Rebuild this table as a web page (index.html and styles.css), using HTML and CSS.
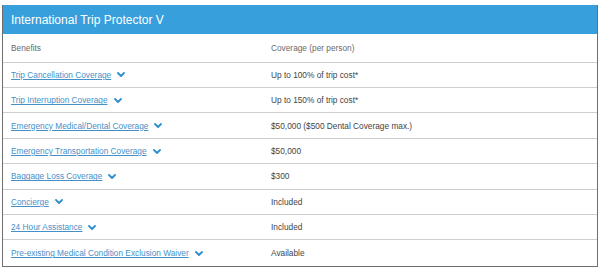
FILE: index.html
```html
<!DOCTYPE html>
<html>
<head>
<meta charset="utf-8">
<link rel="stylesheet" href="styles.css">
</head>
<body>
<div class="card">
  <div class="title">International Trip Protector V</div>
  <div class="row head">
    <div class="c1">Benefits</div>
    <div class="c2">Coverage (per person)</div>
  </div>
  <div class="row">
    <div class="c1"><a href="#">Trip Cancellation Coverage</a><svg class="chev" viewBox="0 0 8 5"><polyline points="1,1 4,4 7,1"/></svg></div>
    <div class="c2">Up to 100% of trip cost*</div>
  </div>
  <div class="row">
    <div class="c1"><a href="#">Trip Interruption Coverage</a><svg class="chev" viewBox="0 0 8 5"><polyline points="1,1 4,4 7,1"/></svg></div>
    <div class="c2">Up to 150% of trip cost*</div>
  </div>
  <div class="row">
    <div class="c1"><a href="#">Emergency Medical/Dental Coverage</a><svg class="chev" viewBox="0 0 8 5"><polyline points="1,1 4,4 7,1"/></svg></div>
    <div class="c2">$50,000 ($500 Dental Coverage max.)</div>
  </div>
  <div class="row">
    <div class="c1"><a href="#">Emergency Transportation Coverage</a><svg class="chev" viewBox="0 0 8 5"><polyline points="1,1 4,4 7,1"/></svg></div>
    <div class="c2">$50,000</div>
  </div>
  <div class="row">
    <div class="c1"><a href="#">Baggage Loss Coverage</a><svg class="chev" viewBox="0 0 8 5"><polyline points="1,1 4,4 7,1"/></svg></div>
    <div class="c2">$300</div>
  </div>
  <div class="row">
    <div class="c1"><a href="#">Concierge</a><svg class="chev" viewBox="0 0 8 5"><polyline points="1,1 4,4 7,1"/></svg></div>
    <div class="c2">Included</div>
  </div>
  <div class="row">
    <div class="c1"><a href="#">24 Hour Assistance</a><svg class="chev" viewBox="0 0 8 5"><polyline points="1,1 4,4 7,1"/></svg></div>
    <div class="c2">Included</div>
  </div>
  <div class="row last">
    <div class="c1"><a href="#">Pre-existing Medical Condition Exclusion Waiver</a><svg class="chev" viewBox="0 0 8 5"><polyline points="1,1 4,4 7,1"/></svg></div>
    <div class="c2">Available</div>
  </div>
</div>
</body>
</html>
```

FILE: styles.css
```css
html, body {
  margin: 0;
  padding: 0;
  background: #ffffff;
}
body {
  padding: 5px 2px 0 2px;
  font-family: "Liberation Sans", Arial, sans-serif;
}
.card {
  width: 596px;
  box-sizing: border-box;
  border: 1px solid #6f6f6f;
  border-top: none;
  border-left-width: 1.5px;
  border-right-width: 1.5px;
  border-bottom-width: 1.5px;
  background: #fff;
}
.title {
  background: #379fdc;
  color: #ffffff;
  font-size: 12px;
  height: 29px;
  display: flex;
  align-items: center;
  padding-left: 8px;
}
.row {
  display: grid;
  grid-template-columns: 268px 1fr;
  align-items: center;
  height: 25.4px;
  box-sizing: border-box;
  border-bottom: 1.5px solid #cfcfcf;
  font-size: 8.3px;
  color: #444;
}
.row.head {
  height: 28.7px;
  color: #6a6a6a;
}
.row.last {
  border-bottom: none;
}
.c1 {
  padding-left: 8px;
  display: flex;
  align-items: center;
}
.c2 {
  padding-left: 0;
}
.c1 a {
  color: #4690c8;
  text-decoration: underline;
  text-decoration-thickness: 0.6px;
  text-underline-offset: 1px;
}
.chev {
  width: 8px;
  height: 5px;
  margin-left: 6px;
  fill: none;
  stroke: #2f8fd0;
  stroke-width: 1.8;
  stroke-linecap: round;
  stroke-linejoin: round;
}
```
